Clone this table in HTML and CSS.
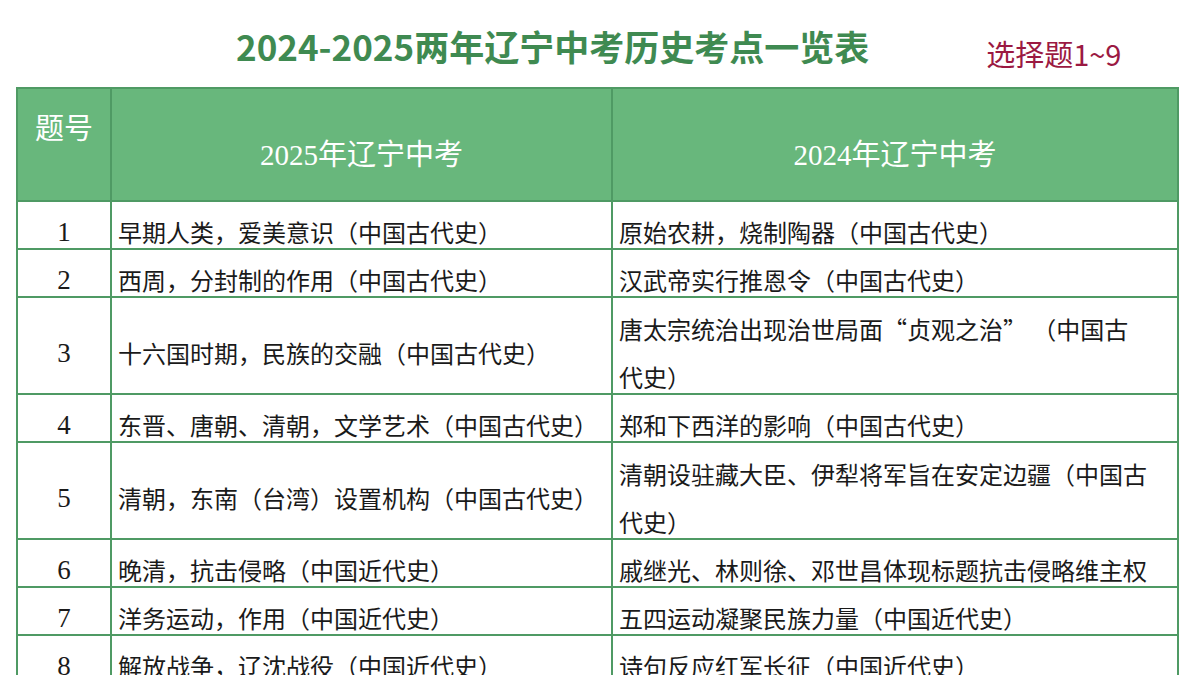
FILE: index.html
```html
<!DOCTYPE html>
<html lang="zh-CN">
<head>
<meta charset="utf-8">
<title>2024-2025两年辽宁中考历史考点一览表</title>
<link rel="stylesheet" href="styles.css">
</head>
<body>
<div class="top">
  <h1 class="title">2024-2025两年辽宁中考历史考点一览表</h1>
  <div class="sub">选择题1~9</div>
</div>
<table class="grid">
  <colgroup>
    <col class="c-no">
    <col class="c-a">
    <col class="c-b">
  </colgroup>
  <thead>
    <tr>
      <th class="h-no">题号</th>
      <th class="h-col">2025年辽宁中考</th>
      <th class="h-col">2024年辽宁中考</th>
    </tr>
  </thead>
  <tbody>
    <tr>
      <td class="no"><div class="in">1</div></td>
      <td><div class="in">早期人类，爱美意识（中国古代史）</div></td>
      <td><div class="in">原始农耕，烧制陶器（中国古代史）</div></td>
    </tr>
    <tr>
      <td class="no"><div class="in">2</div></td>
      <td><div class="in">西周，分封制的作用（中国古代史）</div></td>
      <td><div class="in">汉武帝实行推恩令（中国古代史）</div></td>
    </tr>
    <tr>
      <td class="no"><div class="in">3</div></td>
      <td><div class="in">十六国时期，民族的交融（中国古代史）</div></td>
      <td><div class="in two">唐太宗统治出现治世局面“贞观之治” （中国古<br>代史）</div></td>
    </tr>
    <tr>
      <td class="no"><div class="in">4</div></td>
      <td><div class="in">东晋、唐朝、清朝，文学艺术（中国古代史）</div></td>
      <td><div class="in">郑和下西洋的影响（中国古代史）</div></td>
    </tr>
    <tr>
      <td class="no"><div class="in">5</div></td>
      <td><div class="in">清朝，东南（台湾）设置机构（中国古代史）</div></td>
      <td><div class="in two">清朝设驻藏大臣、伊犁将军旨在安定边疆（中国古<br>代史）</div></td>
    </tr>
    <tr>
      <td class="no"><div class="in">6</div></td>
      <td><div class="in">晚清，抗击侵略（中国近代史）</div></td>
      <td><div class="in">戚继光、林则徐、邓世昌体现标题抗击侵略维主权</div></td>
    </tr>
    <tr>
      <td class="no"><div class="in">7</div></td>
      <td><div class="in">洋务运动，作用（中国近代史）</div></td>
      <td><div class="in">五四运动凝聚民族力量（中国近代史）</div></td>
    </tr>
    <tr>
      <td class="no"><div class="in">8</div></td>
      <td><div class="in">解放战争，辽沈战役（中国近代史）</div></td>
      <td><div class="in">诗句反应红军长征（中国近代史）</div></td>
    </tr>
  </tbody>
</table>
</body>
</html>
```
FILE: styles.css
```css
html, body {
  margin: 0;
  padding: 0;
  background: #ffffff;
  overflow: hidden;
}
body {
  width: 1200px;
  height: 675px;
  font-family: "Noto Sans CJK SC", "Noto Sans", sans-serif;
  color: #1a1a1a;
}
.top {
  display: flex;
  align-items: flex-start;
  height: 87px;
  box-sizing: border-box;
  padding: 22px 0 0 236px;
}
.title {
  margin: 0;
  font-size: 35px;
  line-height: 48px;
  font-weight: 700;
  color: #3f8a51;
  white-space: nowrap;
}
.sub {
  margin: 10px 0 0 117px;
  font-size: 29px;
  line-height: 42px;
  color: #9b1942;
  white-space: nowrap;
}
.grid {
  margin-left: 16px;
  width: 1161px;
  border-collapse: collapse;
  table-layout: fixed;
}
.c-no { width: 94px; }
.c-a { width: 501px; }
.c-b { width: 566px; }
.grid th, .grid td {
  border: 2px solid #4f9a64;
  padding: 0;
}
.grid th {
  background: #68b77c;
  color: #ffffff;
  font-weight: 400;
  height: 90px;
}
.h-no {
  vertical-align: top;
  font-size: 29px;
  line-height: 40px;
  padding-top: 17px !important;
}
.h-col {
  vertical-align: middle;
  font-size: 29px;
  line-height: 40px;
  padding-top: 21px !important;
  font-family: "Liberation Serif", "Noto Sans CJK SC", serif;
}
.grid td {
  vertical-align: middle;
  font-size: 24px;
  white-space: nowrap;
  overflow: hidden;
}
.in {
  line-height: 46px;
  padding: 7px 0 0 6px;
  margin-bottom: -7px;
}
.in.two {
  line-height: 47.5px;
}
.no {
  text-align: center;
  font-family: "Liberation Serif", serif;
  font-size: 27px !important;
}
.no .in {
  padding-left: 0;
}
```
